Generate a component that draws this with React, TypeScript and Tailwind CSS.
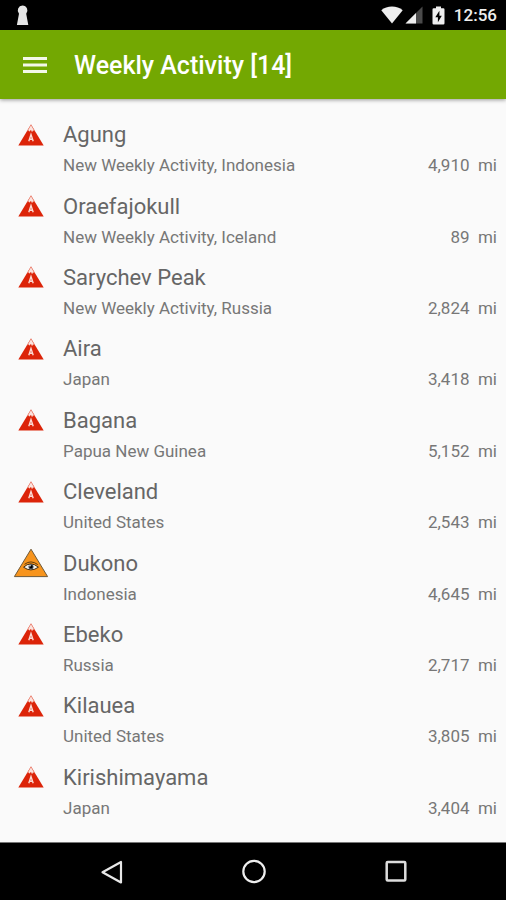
type Volcano = {
  name: string;
  place: string;
  distance: string;
  watch?: boolean;
};

const volcanoes: Volcano[] = [
  { name: "Agung", place: "New Weekly Activity, Indonesia", distance: "4,910" },
  { name: "Oraefajokull", place: "New Weekly Activity, Iceland", distance: "89" },
  { name: "Sarychev Peak", place: "New Weekly Activity, Russia", distance: "2,824" },
  { name: "Aira", place: "Japan", distance: "3,418" },
  { name: "Bagana", place: "Papua New Guinea", distance: "5,152" },
  { name: "Cleveland", place: "United States", distance: "2,543" },
  { name: "Dukono", place: "Indonesia", distance: "4,645", watch: true },
  { name: "Ebeko", place: "Russia", distance: "2,717" },
  { name: "Kilauea", place: "United States", distance: "3,805" },
  { name: "Kirishimayama", place: "Japan", distance: "3,404" },
];

function ActiveIcon() {
  return (
    <svg width="26" height="22" viewBox="0 0 26 22" aria-hidden="true">
      <path d="M13 .5 25.7 21.5H.3Z" fill="#dc2409" />
      <path d="M13 .8 16.6 7l-1.5-.6-1 1.6-1.3-1.9-1.3 1.4-.9-.9-1.3.5Z" fill="#fbe3de" stroke="#e8735f" strokeWidth=".5" />
      <path d="M10.8 17.3 13 10.6l2.2 6.7M11.5 15.2h3" fill="none" stroke="#fbd9d2" strokeWidth="1.4" />
    </svg>
  );
}

function WatchIcon() {
  return (
    <svg width="36" height="30" viewBox="0 0 36 30" aria-hidden="true">
      <path d="M18 1.2 34.6 28.6H1.4Z" fill="#f7941d" stroke="#6f5a3a" strokeWidth="1" strokeLinejoin="round" />
      <path d="M10.6 19.2Q17.5 12.6 25.4 19.2 17.8 24.6 10.6 19.2Z" fill="#f4f1ea" stroke="#2b1c08" strokeWidth=".9" />
      <path d="M11.5 16.3Q18 11.4 24.8 16.6" fill="none" stroke="#4a300c" strokeWidth=".9" />
      <circle cx="18" cy="18.8" r="2.500" fill="#3c4652" />
      <circle cx="18" cy="18.8" r="1.5" fill="#000" />
      <circle cx="17" cy="17.7" r=".8" fill="#fff" />
    </svg>
  );
}

function StatusBar() {
  return (
    <div className="flex h-[30px] items-center justify-between bg-black pl-4 pr-[9px] text-[#eeeeee]">
      <svg width="14" height="22" viewBox="0 0 14 22" fill="#e6e6e6" aria-hidden="true">
        <path d="M6.5 1.5a5 5 0 0 1 3.7 8.3L12.3 21H.9L3 9.800a5 5 0 0 1 3.500-8.300Z" />
      </svg>
      <div className="flex items-center">
        <svg width="22" height="18" viewBox="0 0 22 18" fill="#eeeeee" aria-hidden="true">
          <path d="M11 17.6.3 4.2C3.2 1.9 6.9.6 11 .6s7.8 1.3 10.7 3.6Z" />
        </svg>
        <svg className="ml-0.5" width="18" height="18" viewBox="0 0 18 18" aria-hidden="true">
          <path d="M17.5 .5v17H.5Z" fill="#4a4a4a" />
          <path d="M11 7v10.500H.5Z" fill="#eeeeee" />
        </svg>
        <svg className="ml-[9px]" width="13" height="19" viewBox="0 0 13 19" aria-hidden="true">
          <path d="M4 .5h5v1.700h2.300q1.200 0 1.200 1.200v13.900q0 1.200-1.200 1.200H1.700Q.5 18.500.5 17.300V3.400q0-1.200 1.200-1.200H4Z" fill="#eeeeee" />
          <path d="M7.400 4.800 3.300 11.200h2.600v5L9.800 9.700H7.400Z" fill="#000" />
        </svg>
        <time className="ml-[9px] pt-0.5 text-[17px] font-medium">12:56</time>
      </div>
    </div>
  );
}

function NavigationBar() {
  return (
    <nav className="flex h-[58px] items-center justify-center gap-[110px] border-t border-[#777] bg-black pl-0.5">
      <button type="button" aria-label="Back" className="flex size-8 items-center justify-center">
        <svg width="26" height="26" viewBox="0 0 26 26" fill="none" stroke="#e8e8e8" strokeWidth="2.2" strokeLinejoin="round">
          <path d="M22 3v20.500L3.500 13.200Z" />
        </svg>
      </button>
      <button type="button" aria-label="Home" className="flex size-8 items-center justify-center">
        <svg width="26" height="26" viewBox="0 0 26 26" fill="none" stroke="#eeeeee" strokeWidth="2.2">
          <circle cx="13" cy="12.500" r="10.700" />
        </svg>
      </button>
      <button type="button" aria-label="Recent apps" className="flex size-8 items-center justify-center">
        <svg width="26" height="26" viewBox="0 0 26 26" fill="none" stroke="#dddddd" strokeWidth="2.5">
          <rect x="3.7" y="3" width="18.6" height="18.6" rx="1" />
        </svg>
      </button>
    </nav>
  );
}

export default function App() {
  return (
    <div className="flex min-h-screen flex-col bg-[#fafafa] font-['Roboto',sans-serif]">
      <StatusBar />
      <header className="flex h-[69px] items-center bg-[#73a802] pl-[22px] text-white shadow-[0_1px_4px_rgba(0,0,0,0.4)]">
        <button type="button" aria-label="Open menu" className="mr-[26px] flex size-[26px] items-center justify-center">
          <svg width="24" height="18" viewBox="0 0 24 18" fill="#f3f8e8" aria-hidden="true">
            <path d="M0 1h24v3H0zM0 7.500h24v3H0zM0 14h24v3H0z" />
          </svg>
        </button>
        <h1 className="pt-0.5 text-[25px] font-medium">Weekly Activity [14]</h1>
      </header>
      <main className="flex grow flex-col pb-[14px] pt-[15px]">
        <ul className="grid grow auto-rows-fr">
          {volcanoes.map((v) => (
            <li key={v.name} className="grid min-h-[70px] grid-cols-[63px_1fr_auto] content-center items-center pr-[9px]">
              <span className="flex justify-center pr-px">{v.watch ? <WatchIcon /> : <ActiveIcon />}</span>
              <h2 className="col-span-2 text-[22px] leading-[31px] text-[#666]">{v.name}</h2>
              <p className="col-start-2 text-[17px] leading-[30px] text-[#777]">{v.place}</p>
              <p className="whitespace-pre text-[17px] leading-[30px] text-[#777]">{v.distance}{"  "}mi</p>
            </li>
          ))}
        </ul>
      </main>
      <NavigationBar />
    </div>
  );
}
